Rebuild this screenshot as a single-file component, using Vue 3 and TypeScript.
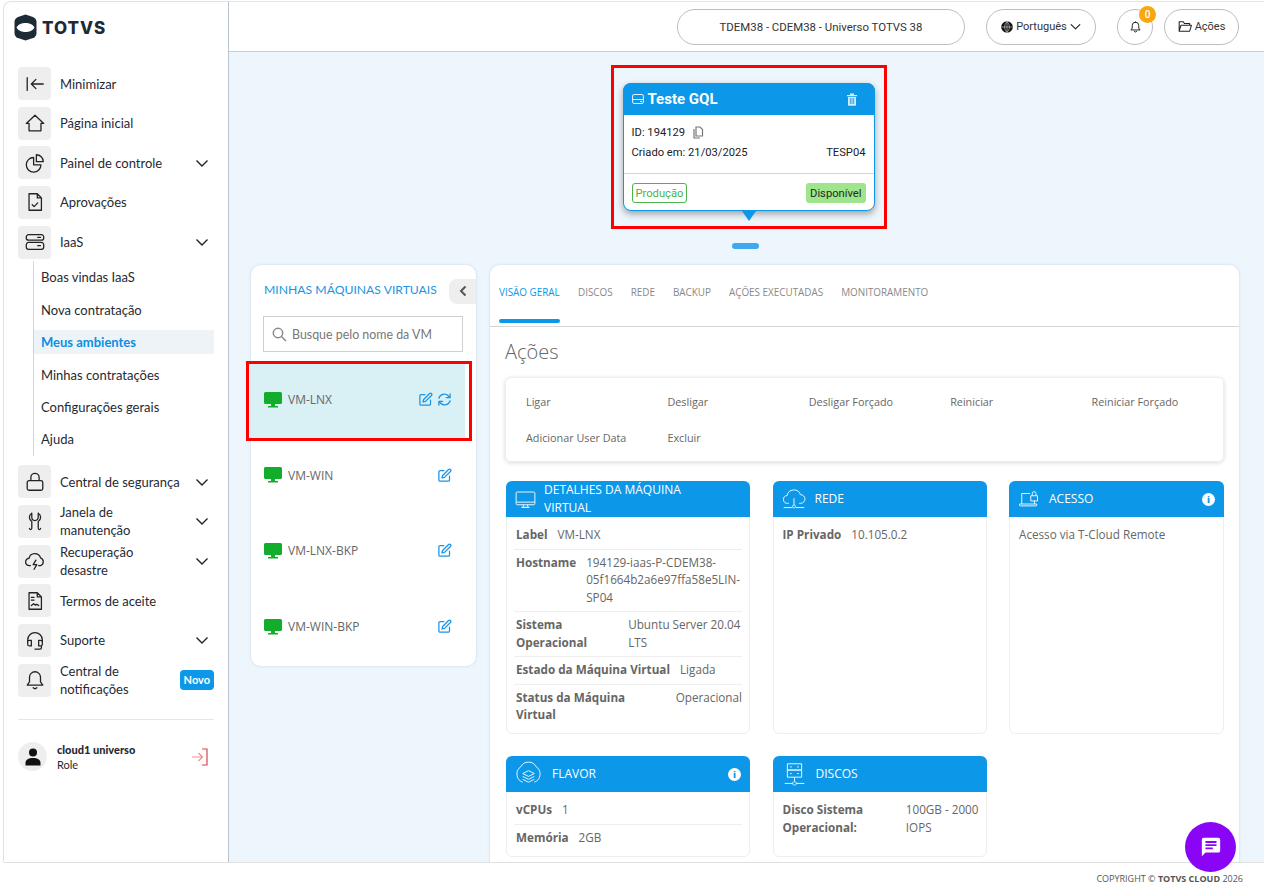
<template>
  <div class="page">
    <aside class="sidebar">
      <div class="logo">
        <svg width="23" height="27" viewBox="0 0 23 27">
          <path d="M11.5 0.5 L19 3 Q22.5 4.5 22.5 8 V19 Q22.5 22.5 19 24 L11.5 26.5 L4 24 Q0.5 22.5 0.5 19 V8 Q0.5 4.5 4 3 Z" fill="#1d2b36" />
          <path d="M2.500 13.500 C4.500 10 8 9 11.500 9 C15 9 18.500 10 20.500 13.500 C18.500 17 15 18 11.500 18 C8 18 4.500 17 2.500 13.500 Z" fill="#fff" />
        </svg>
        <span class="logo-text">TOTVS</span>
      </div>

      <nav class="menu">
        <template v-for="item in menu" :key="item.label">
          <div class="menu-item">
            <span class="menu-icon">
              <svg width="22" height="22" viewBox="0 0 24 24" class="line"><path :d="icons[item.icon]" /></svg>
            </span>
            <span class="menu-label">{{ item.label }}</span>
            <span v-if="item.badge" class="novo">{{ item.badge }}</span>
            <svg v-if="item.arrow" class="chev" width="14" height="14" viewBox="0 0 14 14"><path d="M1.5 4.5 7 10l5.5-5.5" /></svg>
          </div>
          <ul v-if="item.children" class="submenu">
            <li v-for="sub in item.children" :key="sub" :class="{ active: sub === 'Meus ambientes' }">{{ sub }}</li>
          </ul>
        </template>
      </nav>

      <div class="user">
        <span class="avatar">
          <svg width="16" height="18" viewBox="0 0 16 18"><circle cx="8" cy="4.5" r="4" fill="#111" /><path d="M0.5 17.5v-2.5c0-3.5 3-5 7.5-5s7.5 1.500 7.500 5v2.500z" fill="#111" /></svg>
        </span>
        <div class="user-info">
          <strong>cloud1 universo</strong>
          <span>Role</span>
        </div>
        <svg class="logout" width="18" height="18" viewBox="0 0 18 18"><path d="M1 9h10M7.500 5l4 4-4 4" stroke="#ef8f8f" /><path d="M11 1h5v16h-5" stroke="#d9434e" /></svg>
      </div>
    </aside>

    <div class="main">
      <header class="topbar">
        <button class="pill env">TDEM38 - CDEM38 - Universo TOTVS 38</button>
        <button class="pill lang">
          <svg width="12" height="12" viewBox="0 0 12 12"><circle cx="6" cy="6" r="5.800" fill="#111" /><path d="M0.500 6h11M6 .5v11M6 .5q-5 5.500 0 11q5-5.500 0-11" stroke="#fff" stroke-width=".5" fill="none" /></svg>
          Português
          <svg width="11" height="11" viewBox="0 0 14 14" class="line"><path d="M1.500 4.500 7 10l5.500-5.500" /></svg>
        </button>
        <button class="pill bell">
          <svg width="13" height="14" viewBox="0 0 24 24" class="line thick"><path :d="icons.bell" /></svg>
          <span class="count">0</span>
        </button>
        <button class="pill acts">
          <svg width="14" height="13" viewBox="0 0 24 22" class="line thick"><path d="M2 19V3h7l2 3h9v3 M2 19 5 9h18l-3 10z" /></svg>
          Ações
        </button>
      </header>

      <main class="content">
        <div class="highlight">
          <div class="env-card">
            <div class="env-head">
              <svg width="12" height="12" viewBox="0 0 12 12" class="white"><rect x=".6" y="1.500" width="10.800" height="9" rx="1.500" /><path d="M.6 6.500h10.800M8 8.500h2" /></svg>
              <span class="env-name">Teste GQL</span>
              <svg class="trash" width="12" height="13" viewBox="0 0 12 13"><path d="M1 2h10v1.200H1zM4 .6h4V2H4zM2 4h8v8a.8.8 0 0 1-.8.8H2.800A.8.8 0 0 1 2 12z" fill="#d3edfb" /><path d="M4.300 5v6M6 5v6M7.700 5v6" stroke="#0c97e8" stroke-width=".8" /></svg>
            </div>
            <div class="env-body">
              <div class="env-line">
                <span>ID: 194129</span>
                <svg width="12" height="13" viewBox="0 0 12 13" fill="none" stroke="#777" stroke-width="1.200"><path d="M4 1h4l2.500 2.500V10H4z" /><path d="M2 3v9h6" /></svg>
              </div>
              <div class="env-line between"><span>Criado em: 21/03/2025</span><span>TESP04</span></div>
            </div>
            <div class="env-foot">
              <span class="tag outline">Produção</span>
              <span class="tag solid">Disponível</span>
            </div>
            <span class="arrow"></span>
          </div>
        </div>
        <span class="dot"></span>

        <div class="panels">
          <section class="vm-panel">
            <div class="vm-title">
              <span>MINHAS MÁQUINAS VIRTUAIS</span>
              <button class="collapse">
                <svg width="8" height="12" viewBox="0 0 8 12"><path d="M6.500 1.500 2 6l4.500 4.500" fill="none" stroke="#555" stroke-width="2" /></svg>
              </button>
            </div>
            <div class="search">
              <svg width="15" height="15" viewBox="0 0 15 15" fill="none" stroke="#8a8a8a" stroke-width="1.500"><circle cx="6" cy="6" r="4.700" /><path d="m9.500 9.500 4.500 4.500" /></svg>
              <span>Busque pelo nome da VM</span>
            </div>
            <div class="vm-list">
              <div v-for="(vm, i) in vms" :key="vm" class="vm-item" :class="{ selected: i === 0 }">
                <svg width="18" height="16" viewBox="0 0 18 16"><path d="M1.500 0h15A1.500 1.500 0 0 1 18 1.500v9a1.500 1.500 0 0 1-1.500 1.500h-15A1.500 1.500 0 0 1 0 10.500v-9A1.500 1.500 0 0 1 1.500 0z" fill="#12ad2b" /><path d="M7 12h4v2h3v1.500H4V14h3z" fill="#12ad2b" /></svg>
                <span class="vm-name">{{ vm }}</span>
                <svg class="vm-action" width="15" height="15" viewBox="0 0 24 24"><path :d="icons.edit" /></svg>
                <svg v-if="i === 0" class="vm-action" width="15" height="15" viewBox="0 0 24 24"><path :d="icons.refresh" /></svg>
                <span v-if="i === 0" class="red-mark"></span>
              </div>
            </div>
          </section>

          <section class="detail-panel">
            <div class="tabs">
              <span v-for="(tab, i) in tabs" :key="tab" class="tab" :class="{ current: i === 0 }">{{ tab }}</span>
            </div>
            <div class="detail-body">
              <h2>Ações</h2>
              <div class="actions">
                <span v-for="a in actions" :key="a">{{ a }}</span>
              </div>
              <div class="cards">
                <article v-for="card in cards" :key="card.title" class="card">
                  <div class="card-head">
                    <span class="icon-slot" :style="{ width: card.slot + 'px' }">
                      <svg class="card-icon" :width="card.iconSize" :height="card.iconSize" viewBox="0 0 28 28"><path :d="icons[card.icon]" /></svg>
                    </span>
                    <span class="card-title">{{ card.title }}</span>
                    <span v-if="card.info" class="info">i</span>
                  </div>
                  <div class="card-body">
                    <div v-for="row in card.rows" :key="row.value" class="row">
                      <b v-if="row.label">{{ row.label }}</b>
                      <span>{{ row.value }}</span>
                    </div>
                  </div>
                </article>
              </div>
            </div>
          </section>
        </div>
      </main>
    </div>

    <footer class="footer">COPYRIGHT © <b>TOTVS CLOUD</b> 2026</footer>

    <button class="chat">
      <svg width="22" height="22" viewBox="0 0 24 24"><path d="M4 2h16a2 2 0 0 1 2 2v12a2 2 0 0 1-2 2H6l-4 4V4a2 2 0 0 1 2-2z" fill="#fff" /><path d="M6 6.500h12M6 10h12M6 13.500h8" stroke="#8a04f5" stroke-width="2" /></svg>
    </button>
  </div>
</template>

<script setup lang="ts">
interface MenuItem {
  label: string;
  icon: string;
  arrow?: boolean;
  badge?: string;
  children?: string[];
}

interface CardRow {
  label?: string;
  value: string;
}

interface InfoCard {
  title: string;
  icon: string;
  iconSize: number;
  slot: number;
  info?: boolean;
  rows: CardRow[];
}

// um path por icone, tudo em traço
const icons: Record<string, string> = {
  minimize: 'M3.500 5v14M21 12H8M13 7l-5 5 5 5',
  home: 'M12 3.500 2.500 12.500H5.500V20.500H18.500V12.500H21.500Z',
  pie: 'M10.500 6a8 8 0 1 0 8 8h-8zM13.500 3a7.500 7.500 0 0 1 7.500 7.500h-7.500z',
  doc: 'M5.500 3h9l4.500 4.500V21h-13.500zM14.500 3v4.500H19M9 15l2 2 4-4',
  server: 'M5 4h14a2.500 2.500 0 0 1 2.500 2.500v1A2.500 2.500 0 0 1 19 10H5a2.500 2.500 0 0 1-2.500-2.500v-1A2.500 2.500 0 0 1 5 4zM5 12.500h14a2.500 2.500 0 0 1 2.500 2.500v2.500A2.500 2.500 0 0 1 19 20H5a2.500 2.500 0 0 1-2.500-2.500V15A2.500 2.500 0 0 1 5 12.500zM15 7h3M15 16h3',
  lock: 'M5.500 10.500h13a2 2 0 0 1 2 2V19a2 2 0 0 1-2 2h-13a2 2 0 0 1-2-2v-6.500a2 2 0 0 1 2-2zM7.500 10.500V7a4.500 4.500 0 0 1 9 0v3.500',
  wrench: 'M8.500 3.500C5 5.500 5 10.500 8.500 12.500V20a1.300 1.300 0 0 1-2.600 0M15.500 3.500C19 5.500 19 10.500 15.500 12.500V20a1.300 1.300 0 0 0 2.600 0M8.500 3.500V8a3.500 3.500 0 0 0 7 0V3.500',
  storm: 'M7 17H6a4 4 0 0 1-.5-8A6.500 6.500 0 0 1 18 8.500a4.500 4.500 0 0 1 0 8.500h-2M13 11l-3 5h4l-3 5',
  terms: 'M5.500 3h9l4.500 4.500V21h-13.500zM14.500 3v4.500H19M8 8h3M8 11h3M8 17l2.500-2 2 1.500 1.500-1 2 1.500',
  headset: 'M4 14v-2a8 8 0 0 1 16 0v2M6 12.500h2v6H6a2 2 0 0 1-2-2v-2a2 2 0 0 1 2-2zM16 12.500h2a2 2 0 0 1 2 2v2a2 2 0 0 1-2 2h-2zM19 18.500v2a1.500 1.500 0 0 1-1.500 1.500H12',
  bell: 'M12 3a6 6 0 0 0-6 6v5l-2.500 3.500h17L18 14V9a6 6 0 0 0-6-6zM10 20.500q2 2 4 0',
  edit: 'M11 4H5a2 2 0 0 0-2 2v13a2 2 0 0 0 2 2h13a2 2 0 0 0 2-2v-6M18.500 2.500a2.100 2.100 0 0 1 3 3L12 15l-4 1 1-4z',
  refresh: 'M3 10a9 9 0 0 1 15-4l3 3M21 3v6h-6M21 14a9 9 0 0 1-15 4l-3-3M3 21v-6h6',
  monitor: 'M3 4h22a1.500 1.500 0 0 1 1.500 1.500v14A1.500 1.500 0 0 1 25 21H3a1.500 1.500 0 0 1-1.500-1.500v-14A1.500 1.500 0 0 1 3 4zM1.500 17.500h25M11.500 21l-1 3.500h7l-1-3.500M8.500 24.500h11',
  cloud: 'M8 19H6.500a4.500 4.500 0 0 1-.5-9 8 8 0 0 1 15.500-1 5 5 0 0 1 .5 10h-2M14 13v8M2 24h10M16 24h10M14 21a1.700 1.700 0 1 0 .01 0',
  laptop: 'M5 20V6h11M22 15v5M2 20h23v1.500a1 1 0 0 1-1 1H3a1 1 0 0 1-1-1zM17 9h9v7h-9zM19 9V6a2.500 2.500 0 0 1 5 0v3',
  layers: 'M8 22a9 9 0 0 1-2-16 9 9 0 0 1 16 0 9 9 0 0 1-2 16M14 10l6 3-6 3-6-3zM8 16l6 3 6-3M8 19l6 3 6-3',
  rack: 'M6 2h16v7H6zM6 9h16v8H6zM9 5.500h2M17 5.500h2M9 13h2M17 13h2M14 17v5M3 24h9M16 24h9M14 22a2 2 0 1 0 .01 0'
};

const menu: MenuItem[] = [
  { label: 'Minimizar', icon: 'minimize' },
  { label: 'Página inicial', icon: 'home' },
  { label: 'Painel de controle', icon: 'pie', arrow: true },
  { label: 'Aprovações', icon: 'doc' },
  {
    label: 'IaaS',
    icon: 'server',
    arrow: true,
    children: ['Boas vindas IaaS', 'Nova contratação', 'Meus ambientes', 'Minhas contratações', 'Configurações gerais', 'Ajuda']
  },
  { label: 'Central de segurança', icon: 'lock', arrow: true },
  { label: 'Janela de manutenção', icon: 'wrench', arrow: true },
  { label: 'Recuperação desastre', icon: 'storm', arrow: true },
  { label: 'Termos de aceite', icon: 'terms' },
  { label: 'Suporte', icon: 'headset', arrow: true },
  { label: 'Central de notificações', icon: 'bell', badge: 'Novo' }
];

const vms = ['VM-LNX', 'VM-WIN', 'VM-LNX-BKP', 'VM-WIN-BKP'];
const tabs = ['Visão geral', 'Discos', 'Rede', 'Backup', 'Ações executadas', 'Monitoramento'];
const actions = ['Ligar', 'Desligar', 'Desligar Forçado', 'Reiniciar', 'Reiniciar Forçado', 'Adicionar User Data', 'Excluir'];

const cards: InfoCard[] = [
  {
    title: 'Detalhes da Máquina Virtual',
    icon: 'monitor',
    iconSize: 21,
    slot: 29,
    rows: [
      { label: 'Label', value: 'VM-LNX' },
      { label: 'Hostname', value: '194129-iaas-P-CDEM38-05f1664b2a6e97ffa58e5LIN-SP04' },
      { label: 'Sistema Operacional', value: 'Ubuntu Server 20.04 LTS' },
      { label: 'Estado da Máquina Virtual', value: 'Ligada' },
      { label: 'Status da Máquina Virtual', value: 'Operacional' }
    ]
  },
  { title: 'Rede', icon: 'cloud', iconSize: 24, slot: 33, rows: [{ label: 'IP Privado', value: '10.105.0.2' }] },
  { title: 'Acesso', icon: 'laptop', iconSize: 21, slot: 31, info: true, rows: [{ value: 'Acesso via T-Cloud Remote' }] },
  {
    title: 'Flavor',
    icon: 'layers',
    iconSize: 27,
    slot: 37,
    info: true,
    rows: [
      { label: 'vCPUs', value: '1' },
      { label: 'Memória', value: '2GB' }
    ]
  },
  {
    title: 'Discos',
    icon: 'rack',
    iconSize: 25,
    slot: 34,
    rows: [{ label: 'Disco Sistema Operacional:', value: '100GB - 2000 IOPS' }]
  }
];
</script>

<style>
html, body { margin: 0; background: #fff; }
</style>

<style scoped>
.page {
  position: relative;
  width: 1264px;
  height: 893px;
  overflow: hidden;
  display: grid;
  grid-template-columns: 229px 1fr;
  grid-template-rows: 1fr 31px;
  font-family: "Open Sans", sans-serif;
  color: #666;
  background: #fff;
}

/* menu lateral */
.sidebar {
  margin: 1px 0 0 3px;
  border: 1px solid #dfe3e6;
  border-width: 1px 1px 0 1px;
  border-right-color: #b9c4cf;
  border-top-left-radius: 8px;
  padding: 12px 14px 0 14px;
  font-family: Lato, sans-serif;
  color: #1f2a33;
  min-height: 0;
}
.logo { display: flex; align-items: center; gap: 5px; height: 27px; margin-left: -4px; }
.logo-text { font-family: Inter, sans-serif; font-weight: 800; font-size: 17px; letter-spacing: 1px; color: #1d2b36; }
.menu { margin-top: 26px; }
.menu-item { display: flex; align-items: center; height: 33px; margin-bottom: 6.67px; font-size: 13px; line-height: 18px; }
.menu-icon {
  flex: none;
  width: 33px;
  height: 33px;
  margin-right: 9px;
  border-radius: 4px;
  background: #eee;
  display: flex;
  align-items: center;
  justify-content: center;
}
.line { fill: none; stroke: #222; stroke-width: 1.400; stroke-linejoin: round; stroke-linecap: round; }
.line.thick { stroke-width: 1.800; }
.menu-label { flex: 1; padding-right: 12px; }
.chev { flex: none; margin-right: 5px; fill: none; stroke: #222; stroke-width: 1.400; }
.novo { background: #0c97e8; color: #fff; font-weight: 700; font-size: 11px; border-radius: 4px; padding: 3px 4px; line-height: 14px; }
.submenu { list-style: none; margin: -4px 0 9.600px 15px; padding: 0; border-left: 1px solid #d5d5d5; font-size: 13px; }
.submenu li { height: 32.400px; padding-left: 7px; display: flex; align-items: center; }
.submenu li.active { color: #0c8fe0; font-weight: 700; background: linear-gradient(#0000 4px, #eef3f8 4px, #eef3f8 28px, #0000 28px); }
.user { display: flex; align-items: center; margin-top: 22px; padding-top: 22px; border-top: 1px solid #e4e6e8; }
.avatar { width: 29px; height: 29px; border-radius: 50%; background: #eee; display: flex; align-items: center; justify-content: center; margin-right: 10px; }
.user-info { flex: 1; display: flex; flex-direction: column; font-size: 11px; line-height: 15px; }
.user-info strong { font-weight: 900; }
.logout { margin-right: 5px; fill: none; stroke-width: 1.200; }

/* barra de cima */
.main { min-width: 0; min-height: 0; display: flex; flex-direction: column; }
.topbar {
  flex: none;
  height: 51px;
  margin-top: 1px;
  border-top: 1px solid #e3e3e3;
  border-bottom: 1px solid #c7ced4;
  box-sizing: border-box;
  display: flex;
  align-items: center;
  justify-content: flex-end;
  padding-right: 25px;
}
.pill {
  height: 36px;
  box-sizing: border-box;
  border: 1px solid #bdbdbd;
  border-radius: 18px;
  background: #fff;
  font-family: Roboto, sans-serif;
  font-size: 11px;
  color: #333;
  display: flex;
  align-items: center;
  justify-content: center;
  gap: 3px;
  padding: 0;
}
.env { width: 288px; margin-right: 21px; font-size: 11.400px; }
.lang { width: 110px; margin-right: 21px; }
.bell { width: 36px; margin-right: 11px; position: relative; }
.acts { width: 75px; }
.count {
  position: absolute;
  top: -4px;
  right: -4px;
  width: 17px;
  height: 17px;
  border-radius: 50%;
  background: #f7a70f;
  color: #fff;
  font-size: 10px;
  font-weight: 500;
  line-height: 17px;
}

.content { flex: 1; min-height: 0; overflow: hidden; background: #eef6fd; display: flex; flex-direction: column; align-items: center; padding-top: 13px; }

/* cartão do ambiente */
.highlight { border: 3px solid #f00; padding: 15px 9px 15px; box-sizing: border-box; width: 276px; height: 164px; flex: none; margin-left: 4px; }
.env-card {
  position: relative;
  height: 128px;
  box-sizing: border-box;
  border-radius: 8px;
  background: #fff;
  border: 1px solid #0c97e8;
  box-shadow: 0 3px 7px rgba(0, 0, 0, 0.35);
  font-family: Roboto, sans-serif;
  font-size: 11.200px;
  color: #222;
}
.env-head { height: 32px; margin: -1px -1px 0; background: #0c97e8; border-radius: 8px 8px 0 0; display: flex; align-items: center; padding: 0 17px 0 9px; color: #fff; gap: 4px; }
.white { fill: none; stroke: #e4f4fd; stroke-width: 1; }
.env-name { flex: 1; font-size: 15px; font-weight: 700; }
.env-body { padding: 7px 8px 0; box-sizing: border-box; border-bottom: 1px solid #d4d4d4; height: 59px; }
.env-line { display: flex; align-items: center; gap: 7px; height: 20px; }
.between { justify-content: space-between; }
.env-foot { display: flex; justify-content: space-between; padding: 9px 8px 0; }
.tag { height: 20px; box-sizing: border-box; border-radius: 3px; display: flex; align-items: center; padding: 0 4px; }
.outline { border: 1px solid #49b54a; color: #49b54a; padding: 0 3px; }
.solid { background: #9fe58e; color: #1d2d1d; }
.arrow { position: absolute; left: 118px; bottom: -11px; border: 7px solid transparent; border-top: 10px solid #0c97e8; border-bottom: 0; }
.dot { flex: none; width: 27px; height: 6px; margin: 14px 2px 0 0; border-radius: 3px; background: #3fa9ef; }

.panels { flex: none; align-self: stretch; margin-top: 16px; padding: 0 25px 0 22px; display: flex; align-items: flex-start; gap: 14px; }

/* lista de VMs */
.vm-panel { flex: none; width: 225px; height: 401px; box-sizing: border-box; background: #fff; border-radius: 10px; box-shadow: 0 0 3px rgba(120, 140, 160, 0.3); }
.vm-title { height: 51px; display: flex; align-items: center; padding-left: 13px; justify-content: space-between; font-family: Lato, sans-serif; font-size: 12.200px; color: #1a94e6; }
.vm-title span { margin-bottom: 3px; }
.collapse { width: 27px; height: 25px; margin-top: 1px; border: 0; border-radius: 8px 0 0 8px; background: #eee; padding: 0; display: flex; align-items: center; justify-content: center; }
.search { margin-left: 12px; width: 200px; height: 36px; box-sizing: border-box; border: 1px solid #ccd0d4; display: flex; align-items: center; gap: 5px; padding-left: 8px; font-family: Lato, sans-serif; font-size: 12.400px; color: #777; }
.vm-list { margin-top: 10px; width: 214px; }
.vm-item { position: relative; height: 75.600px; display: flex; align-items: center; padding: 0 13px; font-size: 12px; color: #666; }
.vm-item.selected { background: #d9f0f5; }
.vm-name { flex: 1; margin-left: 6px; }
.vm-action { margin-left: 4px; fill: none; stroke: #1a94e6; stroke-width: 2; stroke-linejoin: round; stroke-linecap: round; }
.red-mark { position: absolute; left: -5px; top: -1px; width: 226px; height: 80px; box-sizing: border-box; border: 3px solid #f00; }

/* detalhe */
.detail-panel { flex: 1; min-width: 0; background: #fff; border-radius: 10px 10px 0 0; box-shadow: 0 0 3px rgba(120, 140, 160, 0.3); height: 620px; }
.tabs { height: 61px; padding-left: 9px; border-bottom: 1px solid #d5d5d5; display: flex; gap: 18px; }
.tab { position: relative; font-size: 9.900px; line-height: 55px; text-transform: uppercase; color: #888; }
.tab.current { color: #0c97e8; width: 61px; white-space: nowrap; }
.tab.current::after { content: ""; position: absolute; left: 0; right: 0; bottom: 3px; height: 4px; border-radius: 2px; background: #0c97e8; }
.detail-body { padding: 0 15px; }
h2 { margin: 12px 0 12px; font-size: 20px; font-weight: 300; line-height: 26px; color: #666; }
.actions {
  height: 85px;
  box-sizing: border-box;
  border: 1px solid #eee;
  border-radius: 6px;
  box-shadow: 0 1px 4px rgba(0, 0, 0, 0.15);
  padding: 0 0 0 20px;
  display: grid;
  grid-template-columns: repeat(5, 141.400px);
  grid-template-rows: 36px 36px;
  align-content: center;
  align-items: center;
  font-size: 10.800px;
  color: #666;
}
.cards { margin: 19px 0 0 1px; display: grid; grid-template-columns: 244px 214px 215px; column-gap: 22.500px; row-gap: 22px; grid-template-rows: 253px 101px; }
.card { border: 1px solid #eee; border-radius: 6px; }
.card-head { height: 36px; background: #0c97e8; color: #fff; display: flex; align-items: center; padding: 0 9px; font-size: 12px; line-height: 18px; text-transform: uppercase; margin: -1px -1px 0; border-radius: 6px 6px 0 0; }
.icon-slot { flex: none; display: flex; align-items: center; }
.card-icon { fill: none; stroke: #e6f5fe; stroke-width: 1; }
.card-icon path { vector-effect: non-scaling-stroke; }
.card-title { flex: 1; max-width: 160px; }
.info { width: 13px; height: 13px; margin-left: auto; border-radius: 50%; background: #fff; color: #0c97e8; font-size: 9px; font-weight: 800; line-height: 13px; text-align: center; text-transform: none; }
.card-body { padding: 5.400px 7px 0; font-size: 11.700px; line-height: 17.500px; }
.row { display: flex; gap: 10px; padding: 4px 0 5px 2px; border-bottom: 1px solid #eee; }
.row:last-child { border-bottom: 0; }
.row b { color: #666; font-weight: 700; }

.footer { grid-column: 1 / 3; margin-left: 4px; border-top: 1px solid #e0e0e0; text-align: right; padding: 9px 21px 0 0; font-size: 9px; color: #555; }
.chat { position: absolute; left: 1185px; top: 822px; width: 51px; height: 50px; border: 0; padding: 0; border-radius: 50%; background: #8a04f5; display: flex; align-items: center; justify-content: center; }
</style>
